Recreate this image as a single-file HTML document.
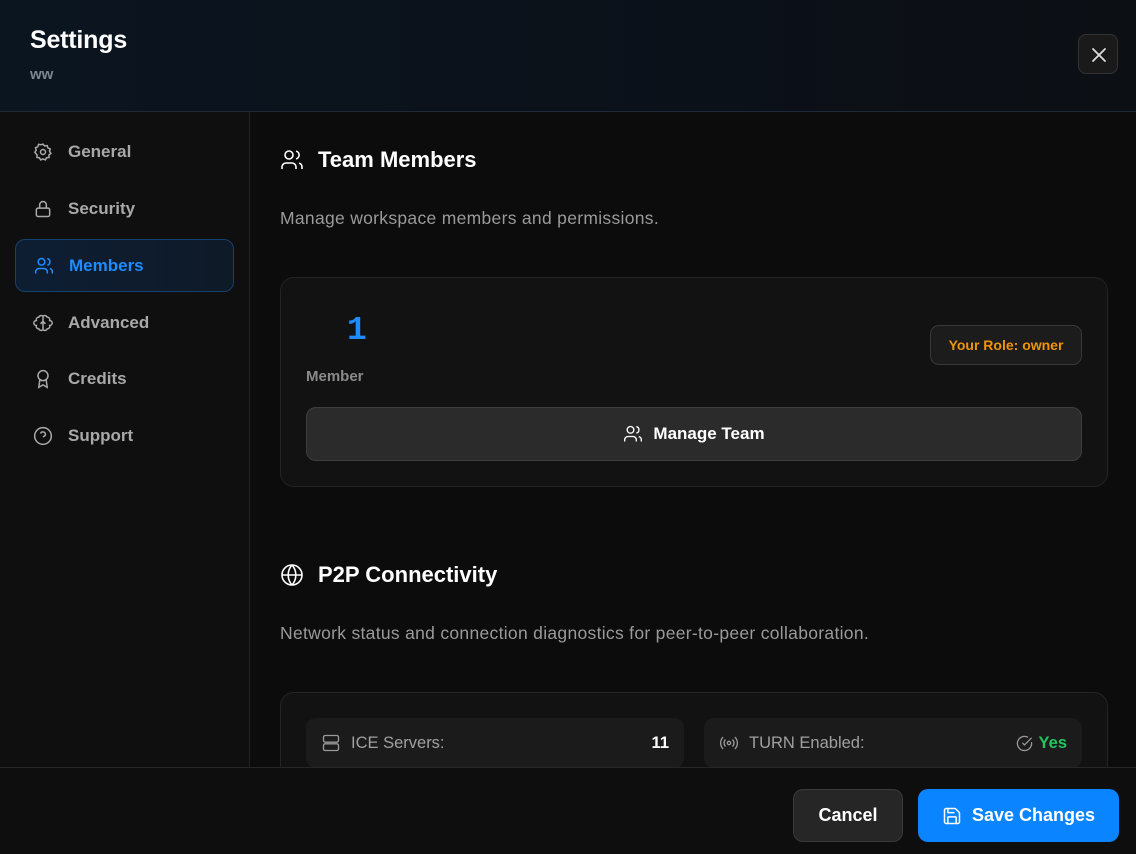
<!DOCTYPE html>
<html><head><meta charset="utf-8"><style>
*{box-sizing:border-box;margin:0;padding:0}
body{width:1136px;height:854px;overflow:hidden;background:#0c0c0c;font-family:"Liberation Sans",sans-serif;color:#fff;position:relative}
.hdr{position:absolute;left:0;top:0;width:1136px;height:112px;background:linear-gradient(90deg,#0b1520,#0b1119 60%,#0c0f14);border-bottom:1px solid #1f2a36}
.hdr h1{position:absolute;left:30px;top:26px;font-size:25px;font-weight:bold;letter-spacing:-0.2px}
.hdr .sub{position:absolute;left:30px;top:66px;font-size:15px;font-weight:bold;color:#7d8590}
.close{position:absolute;left:1078px;top:34px;width:40px;height:40px;border:1px solid #333;border-radius:8px;background:#1a1a1a}
.side{position:absolute;left:0;top:112px;width:250px;height:655px;background:#0f0f0f;border-right:1px solid #232323}
.item{position:absolute;left:15px;width:219px;height:53px;display:flex;align-items:center;padding-left:18px;font-size:17px;font-weight:bold;color:#a8a8a8}
.item svg{margin-right:15px}
.item.act{background:linear-gradient(90deg,#0d1e33,#0f1a28);border:1px solid #16406e;border-radius:10px;color:#1e8bff}
.main{position:absolute;left:250px;top:112px;width:886px;height:655px;overflow:hidden;background:#0c0c0c}
.h2{position:absolute;left:30px;display:flex;align-items:center;font-size:22px;font-weight:bold}
.h2 svg{margin-right:14px}
.desc{position:absolute;left:30px;font-size:17.5px;letter-spacing:.3px;color:#9a9a9a}
.card{position:absolute;left:30px;width:828px;border:1px solid #242424;border-radius:14px;background:#121212}
.foot{position:absolute;left:0;top:767px;width:1136px;height:87px;background:#0e0e0e;border-top:1px solid #262626}
.btn{position:absolute;top:21px;height:53px;border-radius:10px;display:flex;align-items:center;justify-content:center;font-size:18px;font-weight:bold}
</style></head><body>
<div class="hdr"><h1>Settings</h1><div class="sub">ww</div>
<div class="close"><svg width="40" height="40" viewBox="0 0 40 40"><path d="M14 14l12 12M26 14L14 26" stroke="#ddd" stroke-width="1.8" stroke-linecap="round"/></svg></div></div>
<div class="side">
<div class="item" style="top:13px"><svg width="20" height="20" viewBox="0 0 24 24" fill="none" stroke="#aaa" stroke-width="1.8"><circle cx="12" cy="12" r="3"/><path d="M12 2.5l2 2.3 3-.5.9 2.9 2.8 1.2-.9 2.9 1.7 2.5-2.4 1.8.2 3-3 .3-1.5 2.6-2.8-1.2-2.8 1.2-1.5-2.6-3-.3.2-3L2.2 12.3l1.7-2.5L3 6.9l2.8-1.2.9-2.9 3 .5z"/></svg>General</div>
<div class="item" style="top:70px"><svg width="20" height="20" viewBox="0 0 24 24" fill="none" stroke="#aaa" stroke-width="1.8"><rect x="4" y="11" width="16" height="10" rx="2"/><path d="M8 11V7a4 4 0 018 0v4"/></svg>Security</div>
<div class="item act" style="top:127px"><svg width="20" height="20" viewBox="0 0 24 24" fill="none" stroke="#1e8bff" stroke-width="1.8"><circle cx="9" cy="7" r="4"/><path d="M2 21v-2a4 4 0 014-4h6a4 4 0 014 4v2M16 3.1a4 4 0 010 7.8M22 21v-2a4 4 0 00-3-3.9"/></svg>Members</div>
<div class="item" style="top:184px"><svg width="20" height="20" viewBox="0 0 24 24" fill="none" stroke="#aaa" stroke-width="1.8"><path d="M12 4a3 3 0 00-5 1 3 3 0 00-3 4 3 3 0 000 6 3 3 0 003 4 3 3 0 005 1 3 3 0 005-1 3 3 0 003-4 3 3 0 000-6 3 3 0 00-3-4 3 3 0 00-5-1zM12 4v16M9 13l3-3 3 3"/></svg>Advanced</div>
<div class="item" style="top:240px"><svg width="20" height="20" viewBox="0 0 24 24" fill="none" stroke="#aaa" stroke-width="1.8"><circle cx="12" cy="8" r="6"/><path d="M8.2 12.9L7 22l5-3 5 3-1.2-9.1"/></svg>Credits</div>
<div class="item" style="top:297px"><svg width="20" height="20" viewBox="0 0 24 24" fill="none" stroke="#aaa" stroke-width="1.8"><circle cx="12" cy="12" r="10"/><path d="M9.1 9a3 3 0 015.8 1c0 2-3 3-3 3M12 17h.01"/></svg>Support</div>
</div>
<div class="main">
<div class="h2" style="top:35px"><svg width="24" height="24" viewBox="0 0 24 24" fill="none" stroke="#fff" stroke-width="1.6"><circle cx="9" cy="7" r="4"/><path d="M2 21v-2a4 4 0 014-4h6a4 4 0 014 4v2M16 3.1a4 4 0 010 7.8M22 21v-2a4 4 0 00-3-3.9"/></svg>Team Members</div>
<div class="desc" style="top:96px">Manage workspace members and permissions.</div>
<div class="card" style="top:165px;height:210px">
<div style="position:absolute;left:66px;top:34px;font-family:'Liberation Mono',monospace;font-size:33px;font-weight:bold;color:#1e8bff">1</div>
<div style="position:absolute;left:25px;top:90px;font-size:15px;font-weight:bold;color:#8a8a8a">Member</div>
<div style="position:absolute;left:649px;top:47px;width:152px;height:40px;border:1px solid #383838;border-radius:9px;background:#1c1c1c;color:#f0940a;font-size:14px;font-weight:bold;display:flex;align-items:center;justify-content:center">Your Role: owner</div>
<div style="position:absolute;left:25px;top:129px;width:776px;height:54px;border:1px solid #3e3e3e;border-radius:10px;background:#2b2b2b;display:flex;align-items:center;justify-content:center;font-size:17px;font-weight:bold"><svg width="20" height="20" viewBox="0 0 24 24" fill="none" stroke="#fff" stroke-width="1.6" style="margin-right:10px"><circle cx="9" cy="7" r="4"/><path d="M2 21v-2a4 4 0 014-4h6a4 4 0 014 4v2M16 3.1a4 4 0 010 7.8M22 21v-2a4 4 0 00-3-3.9"/></svg>Manage Team</div>
</div>
<div class="h2" style="top:450px"><svg width="24" height="24" viewBox="0 0 24 24" fill="none" stroke="#fff" stroke-width="1.6"><circle cx="12" cy="12" r="10"/><path d="M2 12h20M12 2a15 15 0 010 20M12 2a15 15 0 000 20"/></svg>P2P Connectivity</div>
<div class="desc" style="top:511px">Network status and connection diagnostics for peer-to-peer collaboration.</div>
<div class="card" style="top:580px;height:120px">
<div style="position:absolute;left:25px;top:25px;width:378px;height:50px;border-radius:10px;background:#1b1b1b;display:flex;align-items:center;padding:0 15px;font-size:16.5px;color:#a0a0a0"><svg width="20" height="20" viewBox="0 0 24 24" fill="none" stroke="#999" stroke-width="1.6" style="margin-right:10px"><rect x="3" y="3" width="18" height="8" rx="2"/><rect x="3" y="13" width="18" height="8" rx="2"/><path d="M7 7h.01M7 17h.01"/></svg>ICE Servers:<span style="margin-left:auto;color:#fff;font-weight:bold">11</span></div>
<div style="position:absolute;left:423px;top:25px;width:378px;height:50px;border-radius:10px;background:#1b1b1b;display:flex;align-items:center;padding:0 15px;font-size:16.5px;color:#a0a0a0"><svg width="20" height="20" viewBox="0 0 24 24" fill="none" stroke="#999" stroke-width="1.6" style="margin-right:10px"><circle cx="12" cy="12" r="2"/><path d="M7.8 16.2a6 6 0 010-8.4M16.2 7.8a6 6 0 010 8.4M4.9 19.1a10 10 0 010-14.2M19.1 4.9a10 10 0 010 14.2"/></svg>TURN Enabled:<span style="margin-left:auto;display:flex;align-items:center;color:#22c55e;font-weight:bold"><svg width="17" height="17" viewBox="0 0 24 24" fill="none" stroke="#999" stroke-width="1.8" style="margin-right:6px"><path d="M21.8 10A10 10 0 1117 3.3"/><path d="M9 11l3 3L22 4"/></svg>Yes</span></div>
</div>
</div>
<div class="foot">
<div class="btn" style="left:793px;width:110px;background:#262626;border:1px solid #3a3a3a">Cancel</div>
<div class="btn" style="left:918px;width:201px;background:#0a84ff"><svg width="20" height="20" viewBox="0 0 24 24" fill="none" stroke="#fff" stroke-width="1.8" style="margin-right:10px"><path d="M15.2 3a2 2 0 011.4.6l3.8 3.8a2 2 0 01.6 1.4V19a2 2 0 01-2 2H5a2 2 0 01-2-2V5a2 2 0 012-2z"/><path d="M17 21v-7a1 1 0 00-1-1H8a1 1 0 00-1 1v7M7 3v4a1 1 0 001 1h7"/></svg>Save Changes</div>
</div>
</body></html>
